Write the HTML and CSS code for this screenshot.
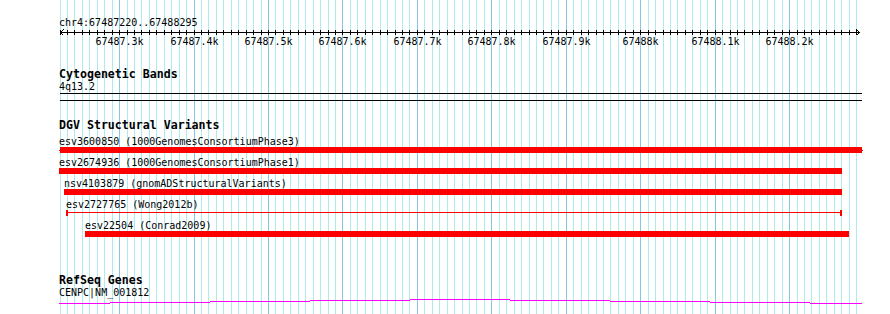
FILE: index.html
```html
<!DOCTYPE html>
<html lang="en">

<head>
  <meta charset="UTF-8">
  <meta name="viewport" content="width=device-width, initial-scale=1.0">
  <title>chr4:67487220..67488295</title>
  <link rel="stylesheet" href="styles.css">
</head>

<body>

  <div class="view">
    <svg class="grid" id="grid" width="890" height="314"></svg>

    <div class="ruler">
      <div class="locus">chr4:67487220..67488295</div>
      <svg class="scale" id="scale" width="890" height="20">
        <rect x="60" y="4" width="800" height="1"></rect>
        <path class="arrow" d="M63.5 1.5 L60.5 4.5 L63.5 7.5"></path>
        <path class="arrow" d="M856.5 1.5 L859.5 4.5 L856.5 7.5"></path>
      </svg>
    </div>

    <div class="track cyto">
      <div class="track-title">Cytogenetic Bands</div>
      <div class="label">4q13.2</div>
      <div class="band"></div>
    </div>

    <div class="track dgv">
      <div class="track-title">DGV Structural Variants</div>

      <div class="feature" style="margin-left: 0px; width: 804px;">
        <div class="label">esv3600850 (1000GenomesConsortiumPhase3)</div>
        <div class="bar ends"></div>
      </div>

      <div class="feature" style="margin-left: 0px; width: 783px;">
        <div class="label">esv2674936 (1000GenomesConsortiumPhase1)</div>
        <div class="bar"></div>
      </div>

      <div class="feature" style="margin-left: 5px; width: 778px;">
        <div class="label">nsv4103879 (gnomADStructuralVariants)</div>
        <div class="bar"></div>
      </div>

      <div class="feature" style="margin-left: 7px; width: 776px;">
        <div class="label">esv2727765 (Wong2012b)</div>
        <div class="bar span"></div>
      </div>

      <div class="feature" style="margin-left: 26px; width: 764px;">
        <div class="label">esv22504 (Conrad2009)</div>
        <div class="bar"></div>
      </div>
    </div>

    <div class="track refseq">
      <div class="track-title">RefSeq Genes</div>
      <div class="gene" style="width: 803px;">
        <div class="label">CENPC|NM_001812</div>
        <!-- intron line, exons are off screen -->
        <svg class="intron" width="803" height="6">
          <rect x="0" y="5" width="51" height="1"></rect>
          <rect x="51" y="4" width="100" height="1"></rect>
          <rect x="151" y="3" width="100" height="1"></rect>
          <rect x="251" y="2" width="100" height="1"></rect>
          <rect x="351" y="1" width="100" height="1"></rect>
          <rect x="451" y="2" width="100" height="1"></rect>
          <rect x="551" y="3" width="100" height="1"></rect>
          <rect x="651" y="4" width="100" height="1"></rect>
          <rect x="751" y="5" width="52" height="1"></rect>
        </svg>
      </div>
    </div>
  </div>

  <script>
    const svgNS = "http://www.w3.org/2000/svg";
    const viewStart = 67487220;
    const viewEnd = 67488295;
    const pxPerBp = 0.7444;

    let grid = document.getElementById("grid");
    let scale = document.getElementById("scale");

    function bpToPx(bp) {
      return Math.floor(60.05 + (bp - viewStart) * pxPerBp);
    }

    for (let bp = viewStart; bp < viewEnd; bp += 10) {
      let x = bpToPx(bp);
      let major = bp % 100 === 0;

      let line = document.createElementNS(svgNS, "rect");
      line.setAttribute("x", x);
      line.setAttribute("y", 0);
      line.setAttribute("width", 1);
      line.setAttribute("height", 314);
      line.setAttribute("class", major ? "major" : "minor");
      grid.appendChild(line);

      let tick = document.createElementNS(svgNS, "rect");
      tick.setAttribute("x", x);
      tick.setAttribute("y", 2);
      tick.setAttribute("width", 1);
      tick.setAttribute("height", 5);
      scale.appendChild(tick);

      if (major) {
        let label = document.createElementNS(svgNS, "text");
        label.setAttribute("x", x + 0.5);
        label.setAttribute("y", 17);
        label.textContent = (bp / 1000) + "k";
        scale.appendChild(label);
      }
    }
  </script>

</body>

</html>
```

FILE: styles.css
```css
body {
  margin: 0;
  background: #fff;
  color: #000;
  font-family: "DejaVu Sans Mono", monospace;
  font-size: 10px;
}

.view {
  position: relative;
  z-index: 0;
  width: 890px;
  height: 314px;
  padding-top: 17px;
  box-sizing: border-box;
  overflow: hidden;
}

.grid {
  position: absolute;
  top: 0;
  left: 0;
  z-index: -1;
  shape-rendering: crispEdges;
}

.grid .minor {
  fill: #aeeaee;
}

.grid .major {
  fill: #88c6e6;
}

.locus {
  padding-left: 59px;
  line-height: 11px;
}

.scale {
  display: block;
  shape-rendering: crispEdges;
}

.scale rect {
  fill: #000;
}

.scale .arrow {
  fill: none;
  stroke: #000;
  stroke-width: 1;
}

.scale text {
  font-family: "DejaVu Sans Mono", monospace;
  font-size: 10px;
  text-anchor: middle;
  fill: #000;
}

.track {
  padding-left: 59px;
}

.track-title {
  font-size: 11.6px;
  font-weight: bold;
  line-height: 13px;
}

.label {
  line-height: 11px;
  white-space: nowrap;
}

.cyto {
  margin-top: 20px;
}

.dgv {
  margin-top: 18px;
}

.refseq {
  margin-top: 37px;
}

.band {
  width: 802px;
  height: 6px;
  margin: 1px 0 0 1px;
  border-top: 1px solid #000;
  border-bottom: 1px solid #000;
}

.feature {
  margin-top: 4px;
}

.bar {
  height: 6px;
  background: #f00;
}

.bar.ends {
  background:
    linear-gradient(#f00, #f00) 1px 0 / calc(100% - 2px) 100% no-repeat,
    linear-gradient(#f00, #f00) 0 3px / 100% 1px no-repeat;
}

.bar.span {
  box-sizing: border-box;
  border-left: 2px solid #f00;
  border-right: 2px solid #f00;
  background: linear-gradient(#f00, #f00) 0 2px / 100% 1px no-repeat;
}

.intron {
  display: block;
  shape-rendering: crispEdges;
}

.intron rect {
  fill: #f0f;
}
```
